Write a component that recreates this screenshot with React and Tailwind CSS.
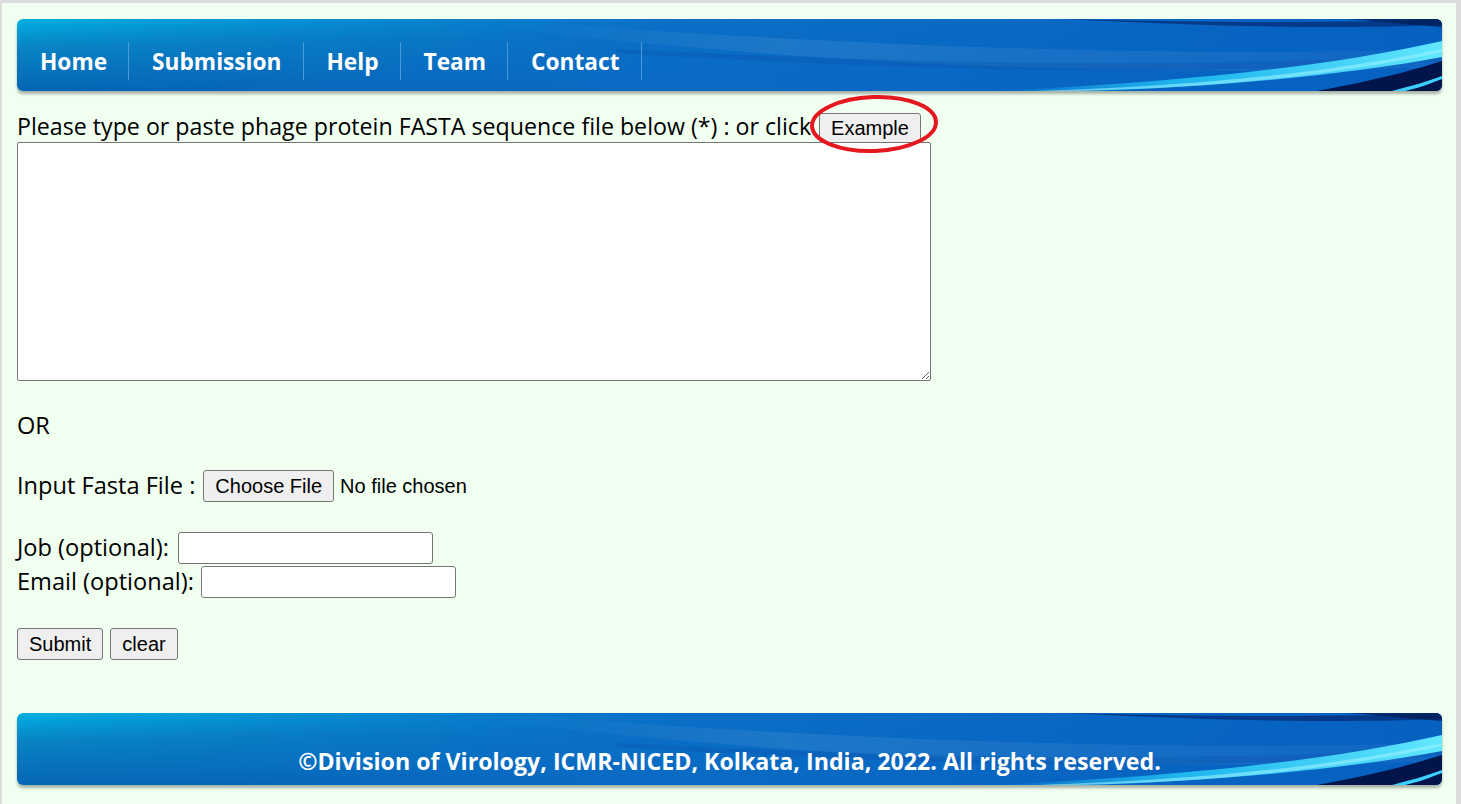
import React from 'react';

const navItems = ['Home', 'Submission', 'Help', 'Team', 'Contact'];

const BannerArt = () => (
    <svg className="absolute inset-0 w-full h-full" viewBox="0 0 1425 72" preserveAspectRatio="none">
        <defs>
            <linearGradient id="base" x1="0" y1="0" x2="0.35" y2="1">
                <stop offset="0" stopColor="#00b0e2" />
                <stop offset="0.35" stopColor="#0883c4" />
                <stop offset="1" stopColor="#0460b2" />
            </linearGradient>
            <linearGradient id="fadeR" x1="0" y1="0" x2="1" y2="0">
                <stop offset="0" stopColor="#0a6cc6" stopOpacity="0" />
                <stop offset="0.45" stopColor="#0a6cc6" stopOpacity="0.9" />
                <stop offset="1" stopColor="#0660c0" stopOpacity="1" />
            </linearGradient>
            <linearGradient id="glow" x1="0" y1="0" x2="1" y2="0">
                <stop offset="0" stopColor="#28d6ff" stopOpacity="0" />
                <stop offset="0.4" stopColor="#22c8f8" stopOpacity="0.8" />
                <stop offset="1" stopColor="#62e8ff" stopOpacity="1" />
            </linearGradient>
            <linearGradient id="sheen" x1="0" y1="0" x2="1" y2="0">
                <stop offset="0" stopColor="#ffffff" stopOpacity="0" />
                <stop offset="0.3" stopColor="#ffffff" stopOpacity="0.08" />
                <stop offset="1" stopColor="#ffffff" stopOpacity="0.04" />
            </linearGradient>
        </defs>
        <rect width="1425" height="72" fill="url(#base)" />
        <rect width="1425" height="72" fill="url(#fadeR)" />
        <path d="M480 0 C 750 22, 1100 40, 1425 30 L 1425 48 C 1100 60, 750 42, 480 8 Z" fill="url(#sheen)" />
        <path d="M600 30 C 900 45, 1150 50, 1425 36 L 1425 42 C 1150 58, 900 52, 600 34 Z" fill="#0a4fa8" opacity="0.3" />
        <path d="M1050 0 C 1200 4, 1330 4, 1425 0 L 1425 6 C 1330 10, 1200 8, 1050 0 Z" fill="#04307a" opacity="0.8" />
        <path d="M980 72 C 1180 62, 1320 46, 1425 22 L 1425 38 C 1330 56, 1200 68, 1070 72 Z" fill="url(#glow)" />
        <path d="M1020 72 C 1200 66, 1320 52, 1425 30 L 1425 33 C 1320 56, 1200 69, 1060 72 Z" fill="#9af2ff" opacity="0.6" />
        <path d="M1300 72 C 1365 60, 1400 50, 1425 42 L 1425 72 Z" fill="#02154a" />
        <path d="M1375 72 C 1398 66, 1412 62, 1425 57 L 1425 60 C 1412 65, 1402 69, 1388 72 Z" fill="#3ad0ff" />
        <path d="M1330 0 L 1425 0 L 1425 8 C 1400 6, 1370 3, 1330 0 Z" fill="#021a50" opacity="0.7" />
    </svg>
);

const btn = "bg-[#efefef] border border-[#767676] rounded-[3px] text-[20px] leading-none text-black px-[11px] font-['Liberation_Sans',sans-serif]";

export default function App() {
    return (
        <div className="min-h-screen bg-[#dcdcdc] pt-[3px] pl-[2px] pr-[5px]">
            <div className="min-h-[801px] bg-[#f0fff0] px-[15px] pt-[16px] pb-[19px] font-['Open_Sans',sans-serif] text-[23.6px] text-black">
                <div className="relative w-[1425px] h-[72px] rounded-[6px] overflow-hidden shadow-[0_3px_3px_rgba(0,0,0,0.3)]">
                    <BannerArt />
                    <ul className="relative flex pt-[23px]">
                        {navItems.map((item) => (
                            <li key={item} className="h-[38px] pl-[23px] pr-[21px] pt-[3px] flex items-center border-r border-[#4d9ad6] text-white font-bold text-[22.7px]">
                                {item}
                            </li>
                        ))}
                    </ul>
                </div>

                <div className="mt-[20px] flex items-center h-[31px]">
                    <span className="text-[23.2px]">Please type or paste phage protein FASTA sequence file below (*) : or click</span>
                    <span className="relative ml-[8px]">
                        <button className={`${btn} h-[30px]`}>Example</button>
                        <svg className="absolute left-[-10px] top-[-16px] w-[130px] h-[62px] pointer-events-none" viewBox="0 0 130 62">
                            <ellipse cx="65" cy="31" rx="62" ry="27" fill="none" stroke="#e5171f" strokeWidth="4" transform="rotate(-2 65 31)" />
                        </svg>
                    </span>
                </div>
                <textarea className="block w-[914px] h-[239px] bg-white border border-[#767676] rounded-[2px] resize" />

                <div className="mt-[31px] h-[27px] flex items-center">OR</div>

                <div className="mt-[31px] flex items-center h-[32px]">
                    <span>Input Fasta File :</span>
                    <button className={`${btn} ml-[8px] h-[32px]`}>Choose File</button>
                    <span className="ml-[6px] text-[20px] font-['Liberation_Sans',sans-serif]">No file chosen</span>
                </div>

                <div className="mt-[30px] flex items-center h-[32px]">
                    <span>Job (optional):</span>
                    <input type="text" className="ml-[9px] w-[255px] h-[32px] bg-white border border-[#767676] rounded-[3px]" />
                </div>
                <div className="mt-[2px] flex items-center h-[32px]">
                    <span>Email (optional):</span>
                    <input type="text" className="ml-[7px] w-[255px] h-[32px] bg-white border border-[#767676] rounded-[3px]" />
                </div>

                <div className="mt-[30px] flex gap-[7px]">
                    <button className={`${btn} h-[32px] w-[86px]`}>Submit</button>
                    <button className={`${btn} h-[32px] w-[68px]`}>clear</button>
                </div>

                <div className="relative mt-[53px] w-[1425px] h-[72px] rounded-[6px] overflow-hidden shadow-[0_3px_3px_rgba(0,0,0,0.3)]">
                    <BannerArt />
                    <div className="relative h-full flex justify-center items-end pb-[6px] text-white font-bold text-[23.2px]">
                        ©Division of Virology, ICMR-NICED, Kolkata, India, 2022. All rights reserved.
                    </div>
                </div>
            </div>
        </div>
    );
}
